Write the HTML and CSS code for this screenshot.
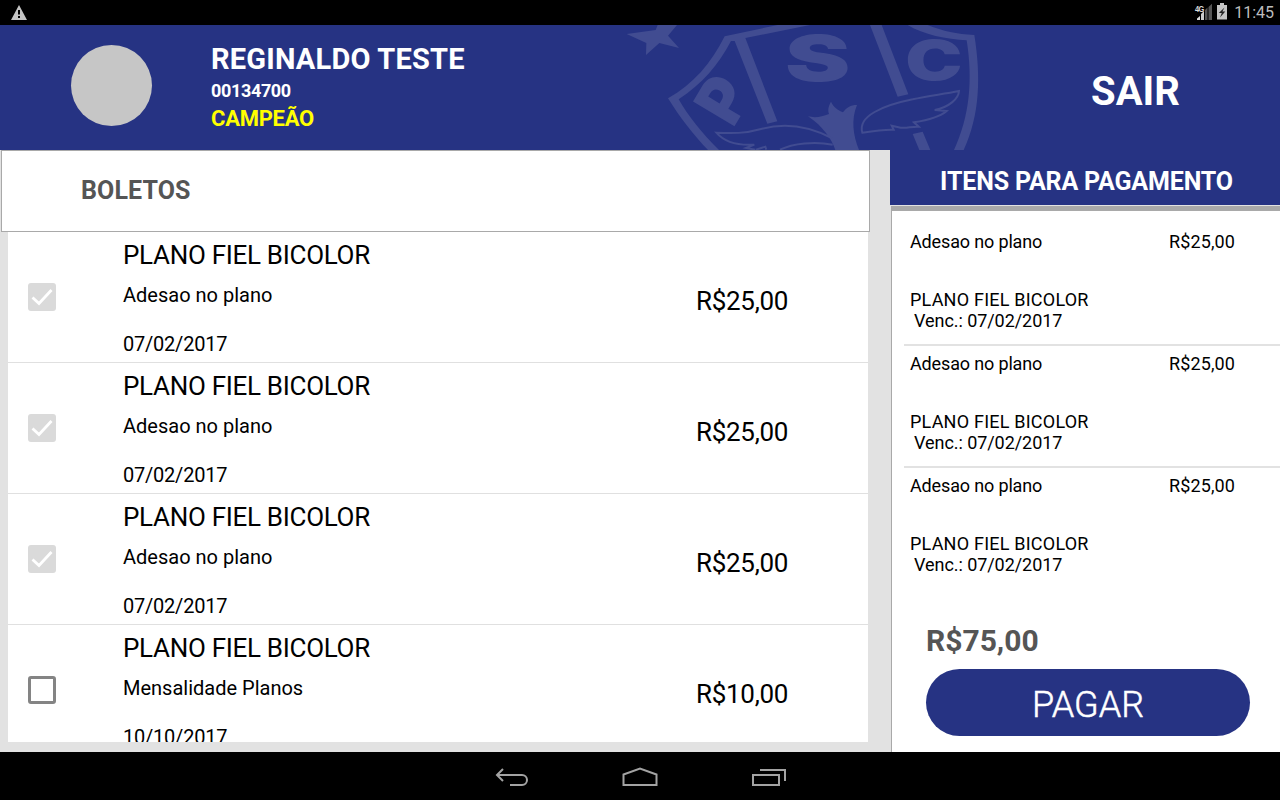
FILE: index.html
```html
<!DOCTYPE html>
<html lang="pt-BR">
<head>
<meta charset="utf-8">
<title>Boletos</title>
<link rel="stylesheet" href="styles.css">
</head>
<body>
<div class="statusbar">
  <svg class="warn" width="16" height="15" viewBox="0 0 16 15"><path d="M8 0 16 15H0Z" fill="#c4c4c4"/><path d="M7 5h2v4.500H7zM7 11h2v2H7z" fill="#000"/></svg>
  <div class="status-right">
    <svg width="19" height="18" viewBox="0 0 19 18"><path d="M3 17V15.500L6 13v4z" fill="#ddd"/><path d="M7 17v-6l3-3v9z" fill="#ccc"/><path d="M11 17V7l2.500-2.500V17zM14.500 17V4L18 .8V17z" fill="#555"/><text transform="translate(1 9) scale(.780 1)" class="net">4G</text></svg>
    <svg width="12" height="17" viewBox="0 0 12 17"><path d="M1 2h3V0h4v2h3v14.500H1z" fill="#c4c4c4"/><path d="M8.500 4.500 2.800 10h3L4 14.500 9.300 8.600H6.400z" fill="#222"/></svg>
    <span class="clock">11:45</span>
  </div>
</div>
<header class="header">
  <svg class="crest" viewBox="0 15 1170 375" width="390" height="125">
    <g fill="#414c91">
      <path d="M143 15 137 30 50 42 109 69 108 105 148 69 207 84 174 47 201 15Z"/>
      <path d="M503 15H600L406 54 502 304 472 311 374 63H363C325 135 278 190 206 238 235 288 272 336 327 390H294C250 345 208 290 174 235 249 193 304 130 344 49Z"/>
      <path d="M780 15H815L895 223 863 230ZM893 15H953C1000 34 1040 42 1093 45 1113 170 1110 285 1061 390H1032C1079 290 1089 180 1070 61 1010 58 940 44 893 15ZM908 342 938 335 961 390H928Z"/>
      <path d="M594 289C615 294 635 291 657 282 652 268 657 255 663 245 671 262 683 270 699 277 709 263 721 255 741 255 723 299 729 345 747 390H676C665 358 640 320 594 289Z"/>
    </g>
    <g fill="none" stroke="#414c91" stroke-width="6">
      <path d="M665 354C590 315 515 309 450 328 406 341 366 340 319 338 340 362 374 378 433 374L408 384 436 389"/>
      <path d="M668 374C615 363 548 370 510 389M438 389 466 380 469 389"/>
      <path d="M757 338C742 288 820 256 908 238 954 227 999 223 1047 213 1046 235 1019 261 974 270L1010 273C989 291 957 300 912 307L926 320C904 319 890 326 872 323L845 317 851 329C820 328 788 333 757 338Z"/>
    </g>
    <g class="crest-letters">
      <text transform="translate(369 326) rotate(-59) scale(.960 1.050)">P</text>
      <text transform="translate(525 182) scale(1.550 1)">S</text>
      <text transform="translate(886 180) scale(1.210 .860)">C</text>
    </g>
  </svg>
  <div class="avatar"></div>
  <div class="member">
    <div class="name">REGINALDO TESTE</div>
    <div class="number">00134700</div>
    <div class="tier">CAMPEÃO</div>
  </div>
  <div class="logout">SAIR</div>
</header>
<main class="main">
  <section class="bills">
    <h1 class="bills-title">BOLETOS</h1>
    <div class="bill-list">
      <div class="bill"><span class="check on"><svg width="28" height="28" viewBox="0 0 28 28"><path d="M4.500 14.500 11 20.500 23.500 7" fill="none" stroke="#fff" stroke-width="2.800"/></svg></span><div class="info"><div class="plan">PLANO FIEL BICOLOR</div><div class="desc">Adesao no plano</div><div class="date">07/02/2017</div></div><div class="price">R$25,00</div></div>
      <div class="bill"><span class="check on"><svg width="28" height="28" viewBox="0 0 28 28"><path d="M4.500 14.500 11 20.500 23.500 7" fill="none" stroke="#fff" stroke-width="2.800"/></svg></span><div class="info"><div class="plan">PLANO FIEL BICOLOR</div><div class="desc">Adesao no plano</div><div class="date">07/02/2017</div></div><div class="price">R$25,00</div></div>
      <div class="bill"><span class="check on"><svg width="28" height="28" viewBox="0 0 28 28"><path d="M4.500 14.500 11 20.500 23.500 7" fill="none" stroke="#fff" stroke-width="2.800"/></svg></span><div class="info"><div class="plan">PLANO FIEL BICOLOR</div><div class="desc">Adesao no plano</div><div class="date">07/02/2017</div></div><div class="price">R$25,00</div></div>
      <div class="bill"><span class="check"></span><div class="info"><div class="plan">PLANO FIEL BICOLOR</div><div class="desc">Mensalidade Planos</div><div class="date">10/10/2017</div></div><div class="price">R$10,00</div></div>
    </div>
  </section>
  <aside class="cart">
    <h2 class="cart-title">ITENS PARA PAGAMENTO</h2>
    <div class="cart-body">
      <div class="items">
        <div class="item"><div class="row"><span class="item-name">Adesao no plano</span><span class="item-price">R$25,00</span></div><div class="item-plan">PLANO FIEL BICOLOR</div><div class="due">Venc.: 07/02/2017</div></div>
        <div class="item"><div class="row"><span class="item-name">Adesao no plano</span><span class="item-price">R$25,00</span></div><div class="item-plan">PLANO FIEL BICOLOR</div><div class="due">Venc.: 07/02/2017</div></div>
        <div class="item"><div class="row"><span class="item-name">Adesao no plano</span><span class="item-price">R$25,00</span></div><div class="item-plan">PLANO FIEL BICOLOR</div><div class="due">Venc.: 07/02/2017</div></div>
      </div>
      <div class="total">R$75,00</div>
      <button class="pay">PAGAR</button>
    </div>
  </aside>
</main>
<nav class="navbar">
  <svg width="34" height="20" viewBox="0 0 34 20"><path d="M2 8H27a5 5 0 0 1 0 10H15M8 2 2 8l6 6" fill="none" stroke="#a3a3a3" stroke-width="2"/></svg>
  <svg width="36" height="20" viewBox="0 0 36 20"><path d="M1.500 18V7.500L18 1.500 34.500 7.500V18Z" fill="none" stroke="#a3a3a3" stroke-width="2"/></svg>
  <svg width="35" height="20" viewBox="0 0 35 20"><path d="M2 8H28V18H2ZM9 3H34V14" fill="none" stroke="#a3a3a3" stroke-width="2"/></svg>
</nav>
</body>
</html>
```
FILE: styles.css
```css
* { box-sizing: border-box; }
body { margin: 0; width: 1280px; height: 800px; overflow: hidden; display: flex; flex-direction: column; background: #000; font-family: Roboto, sans-serif; color: #000; }
svg { display: block; flex: none; }
h1, h2 { margin: 0; }

.statusbar { flex: none; height: 25px; display: flex; justify-content: space-between; padding: 0 6px 0 11px; }
.warn { margin-top: 5px; }
.status-right { display: flex; padding-top: 3px; }
.status-right svg:nth-child(2) { margin: 0 6px 0 3px; }
.net { font: bold 9.500px "Liberation Sans", sans-serif; fill: #ddd; letter-spacing: -.8px; }
.clock { font-size: 16px; line-height: 20px; color: #bdbdbd; }

.header { flex: none; position: relative; height: 125px; display: flex; background: #263383; color: #fff; font-weight: bold; }
.crest { position: absolute; left: 610px; top: 0; }
.crest-letters { font: 900 190px Inter, sans-serif; fill: #414c91; }
.avatar { width: 81px; height: 81px; margin: 20px 0 0 71px; border-radius: 50%; background: #c6c6c6; }
.member { margin-left: 59px; width: 780px; padding-top: 16px; }
.name { font-size: 29px; line-height: 36px; letter-spacing: .2px; }
.number { font-size: 18px; line-height: 28px; letter-spacing: -.35px; }
.tier { font-size: 22px; line-height: 28px; letter-spacing: -.25px; color: #ff0; }
.logout { width: 289px; text-align: center; font-size: 40px; line-height: 134px; position: relative; }

.main { flex: none; height: 602px; display: flex; background: #e2e2e2; }
.bills { width: 890px; padding: 0 20px 0 1px; }
.bills-title { height: 82px; border: 1px solid #a9a9a9; background: #fff; padding-left: 79px; font-size: 25px; line-height: 79px; letter-spacing: .1px; color: #555; }
.bill-list { height: 510px; margin: 0 2px 0 7px; overflow: hidden; background: #fff; }
.bill { height: 131px; border-bottom: 1px solid #e0e0e0; display: flex; padding-left: 20px; }
.check { width: 28px; height: 28px; margin-top: 51px; border-radius: 3px; border: 3px solid #848484; }
.check.on { border: 0; background: #dadada; }
.info { margin-left: 67px; width: 573px; }
.plan { font-size: 26px; line-height: 46px; letter-spacing: -.3px; }
.desc { font-size: 20px; line-height: 34px; }
.date { font-size: 20px; line-height: 64px; letter-spacing: -.22px; }
.price { font-size: 26px; line-height: 138px; letter-spacing: -.3px; }

.cart { width: 390px; display: flex; flex-direction: column; }
.cart-title { height: 55px; background: #263383; color: #fff; text-align: center; font-size: 25px; line-height: 63px; letter-spacing: -.15px; padding-left: 3px; }
.cart-body { flex: none; height: 546px; margin: 1px 0 0 1px; border-left: 1px solid #a9a9a9; border-top: 5px solid #a9a9a9; background: #fff; }
.items { margin-left: 12px; height: 400px; padding-top: 13px; font-size: 18px; line-height: 21px; }
.item { height: 122px; padding: 7px 45px 0 6px; border-bottom: 2px solid #e2e2e2; }
.item:last-child { border: 0; }
.row { display: flex; justify-content: space-between; height: 58px; }
.item-name { letter-spacing: -.15px; }
.item-price { letter-spacing: .1px; }
.item-plan { letter-spacing: .22px; }
.due { padding-left: 4px; letter-spacing: -.06px; }
.total { margin: 15px 0 0 34px; font-size: 30px; line-height: 30px; font-weight: bold; color: #555; }
.pay { display: block; width: 324px; height: 67px; margin: 13px 0 0 34px; padding: 4px 0 0; border: 0; border-radius: 34px; background: #263383; color: #fff; font: 300 36px Roboto, sans-serif; -webkit-text-stroke: .5px #fff; }

.navbar { flex: none; height: 48px; display: flex; align-items: center; padding: 2px 0 0 495px; gap: 93px; }
```
